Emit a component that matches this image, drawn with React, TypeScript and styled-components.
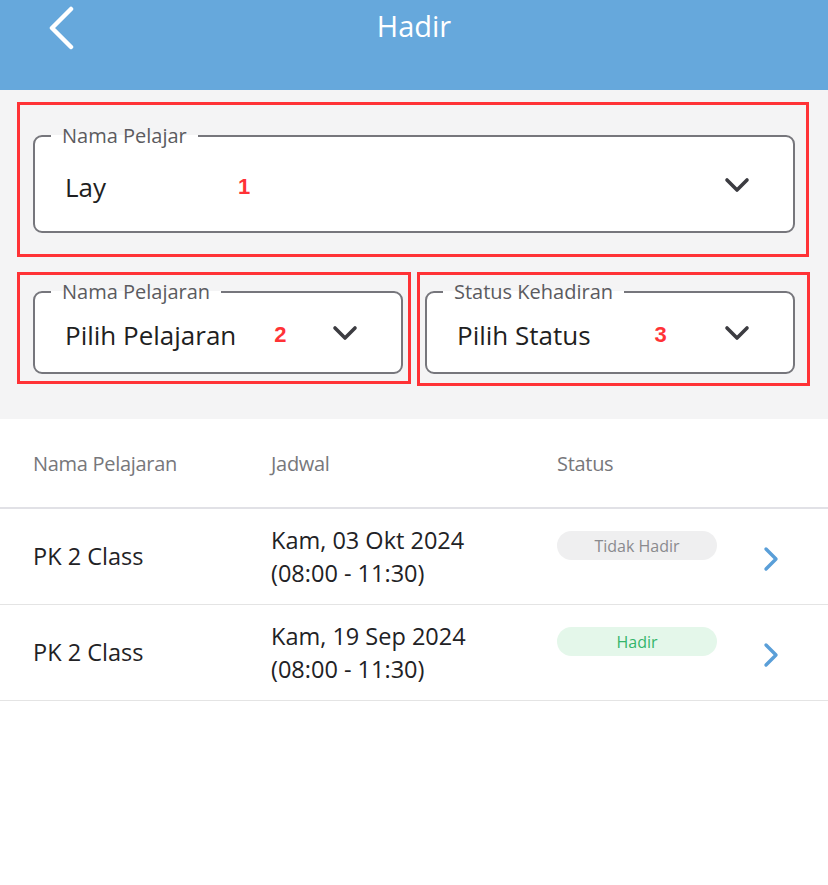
import React from "react";
import styled, { createGlobalStyle } from "styled-components";

const GlobalStyle = createGlobalStyle`
  html, body {
    margin: 0;
    padding: 0;
    background: #ffffff;
    font-family: "Open Sans", "Noto Sans", sans-serif;
  }
  * { box-sizing: border-box; }
`;

const Page = styled.div`
  width: 828px;
  min-height: 885px;
  background: #fff;
`;

// Header
const Header = styled.header`
  position: relative;
  height: 90px;
  background: #66a8dc;
  display: flex;
  justify-content: center;
  padding-top: 4px;
`;

const BackButton = styled.button`
  position: absolute;
  left: 40px;
  top: 2px;
  width: 40px;
  height: 50px;
  padding: 0;
  border: none;
  background: transparent;
  display: flex;
  align-items: center;
  justify-content: center;
`;

const Title = styled.h1`
  margin: 0;
  height: 44px;
  line-height: 44px;
  font-size: 29px;
  font-weight: 400;
  color: #fff;
`;

// Filters
const FilterArea = styled.section`
  background: #f4f4f5;
  padding: 12px 19px 33px 17px;
  display: flex;
  flex-direction: column;
  gap: 15px;
`;

const FilterRow = styled.div`
  display: grid;
  grid-template-columns: 394px 393px;
  gap: 6px;
  align-items: start;
`;

const Mark = styled.div<{ $pad: string }>`
  border: 3px solid #ff3236;
  padding: ${(p) => p.$pad};
`;

const Field = styled.fieldset<{ $h: number }>`
  margin: 0;
  height: ${(p) => p.$h}px;
  border: 2px solid #76767c;
  border-radius: 9px;
  background: #fff;
  padding: 0;
  display: flex;
  align-items: center;
  min-width: 0;
`;

const Legend = styled.legend`
  margin-left: 16px;
  padding: 0 11px;
  font-size: 20px;
  line-height: 24px;
  color: #5b5b60;
`;

const FieldBody = styled.div<{ $shift: number }>`
  flex: 1;
  display: flex;
  align-items: center;
  padding: 0 43px 0 30px;
  margin-top: ${(p) => p.$shift}px;
`;

const Value = styled.span`
  font-size: 26px;
  color: #1f1f22;
`;

const Num = styled.span<{ $x: number }>`
  margin-left: ${(p) => p.$x}px;
  font-family: "Liberation Sans", Arial, sans-serif;
  font-weight: 700;
  font-size: 22px;
  color: #ff3236;
`;

const Chevron = styled.svg`
  margin-left: auto;
  margin-top: -4px;
  flex: none;
`;

// Table
const Table = styled.section`
  display: flex;
  flex-direction: column;
`;

const Row = styled.div<{ $head?: boolean }>`
  display: grid;
  grid-template-columns: 238px 286px 1fr 80px;
  align-items: center;
  padding-left: 33px;
  height: ${(p) => (p.$head ? 90 : 96)}px;
  border-bottom: ${(p) => (p.$head ? "2px solid #e1e1e6" : "1px solid #e4e4e4")};
`;

const HeadCell = styled.span`
  font-size: 20px;
  color: #77777b;
  letter-spacing: -0.3px;
`;

const Cell = styled.span`
  font-size: 23.5px;
  color: #222225;
  line-height: 33px;
`;

const Badge = styled.span<{ $present: boolean }>`
  width: 160px;
  height: 29px;
  border-radius: 15px;
  display: flex;
  align-items: center;
  justify-content: center;
  font-size: 16px;
  font-weight: 500;
  margin-top: -22px;
  background: ${(p) => (p.$present ? "#e4f7ea" : "#efeff0")};
  color: ${(p) => (p.$present ? "#35b56a" : "#8a8a8e")};
`;

const Arrow = styled.svg`
  margin-left: 14px;
  margin-top: 4px;
`;

const DownIcon = () => (
  <Chevron width="26" height="16" viewBox="0 0 26 16">
    <path d="M3 3 L13 13 L23 3" fill="none" stroke="#3c3c41" strokeWidth="3.6" strokeLinecap="round" strokeLinejoin="round" />
  </Chevron>
);

const records = [
  { name: "PK 2 Class", date: "Kam, 03 Okt 2024", time: "(08:00 - 11:30)", present: false },
  { name: "PK 2 Class", date: "Kam, 19 Sep 2024", time: "(08:00 - 11:30)", present: true },
];

export default function App() {
  return (
    <Page>
      <GlobalStyle />
      <Header>
        <BackButton aria-label="Kembali">
          <svg width="34" height="46" viewBox="0 0 34 46">
            <path d="M28 5 L9 24 L28 43" fill="none" stroke="#fff" strokeWidth="4.5" strokeLinecap="round" strokeLinejoin="round" />
          </svg>
        </BackButton>
        <Title>Hadir</Title>
      </Header>

      <FilterArea>
        <Mark $pad="19px 11px 21px 13px">
          <Field $h={109}>
            <Legend>Nama Pelajar</Legend>
            <FieldBody $shift={-6}>
              <Value>Lay</Value>
              <Num $x={132}>1</Num>
              <DownIcon />
            </FieldBody>
          </Field>
        </Mark>

        <FilterRow>
          <Mark $pad="5px 5px 7px 13px">
            <Field $h={94}>
              <Legend>Nama Pelajaran</Legend>
              <FieldBody $shift={-6}>
                <Value>Pilih Pelajaran</Value>
                <Num $x={38}>2</Num>
                <DownIcon />
              </FieldBody>
            </Field>
          </Mark>
          <Mark $pad="5px 12px 9px 5px">
            <Field $h={94}>
              <Legend>Status Kehadiran</Legend>
              <FieldBody $shift={-6}>
                <Value>Pilih Status</Value>
                <Num $x={64}>3</Num>
                <DownIcon />
              </FieldBody>
            </Field>
          </Mark>
        </FilterRow>
      </FilterArea>

      <Table>
        <Row $head>
          <HeadCell>Nama Pelajaran</HeadCell>
          <HeadCell>Jadwal</HeadCell>
          <HeadCell>Status</HeadCell>
          <span />
        </Row>
        {records.map((r, i) => (
          <Row key={i}>
            <Cell>{r.name}</Cell>
            <Cell>
              {r.date}
              <br />
              {r.time}
            </Cell>
            <Badge $present={r.present}>{r.present ? "Hadir" : "Tidak Hadir"}</Badge>
            <Arrow width="18" height="26" viewBox="0 0 18 26">
              <path d="M4 3 L14 13 L4 23" fill="none" stroke="#5a9fd8" strokeWidth="3.4" strokeLinecap="round" strokeLinejoin="round" />
            </Arrow>
          </Row>
        ))}
      </Table>
    </Page>
  );
}
